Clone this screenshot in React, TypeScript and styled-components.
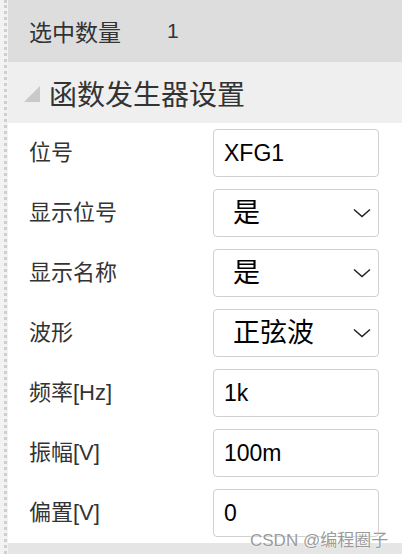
import styled, { createGlobalStyle } from 'styled-components'

const GlobalStyle = createGlobalStyle`
  html, body {
    margin: 0;
    padding: 0;
    background: #fff;
  }
  body {
    font-family: "Liberation Sans", "Noto Sans CJK SC", sans-serif;
  }
`

const Page = styled.div`
  position: relative;
  display: flex;
  width: 402px;
  height: 554px;
  overflow: hidden;
  background: #fff;
`

const Gutter = styled.div`
  width: 8px;
  flex: none;
  background: #f2f2f2;
  display: flex;
  justify-content: center;
  padding-left: 3px;
  box-sizing: border-box;

  &::before {
    content: '';
    width: 0;
    border-left: 3px dotted #cfcfcf;
  }
`

const Panel = styled.div`
  flex: 1;
  display: flex;
  flex-direction: column;
`

const CountBar = styled.div`
  height: 62px;
  background: #dddddd;
  display: flex;
  align-items: center;
  padding-left: 21px;
  font-size: 23px;
  color: #333;
`

const CountLabel = styled.span`
  width: 138px;
`

const CountValue = styled.span`
  font-size: 21px;
`

const SectionHead = styled.div`
  height: 61px;
  background: #efefef;
  display: flex;
  align-items: center;
  padding-left: 16px;
  gap: 9px;
  font-size: 28px;
  color: #333;
`

const Caret = styled.span`
  width: 0;
  height: 0;
  border-left: 16px solid transparent;
  border-bottom: 16px solid #c9c9c9;
  margin-top: 2px;
`

const Form = styled.div`
  display: flex;
  flex-direction: column;
  gap: 12px;
  padding: 6px 0 6px 21px;
`

const Row = styled.div`
  display: flex;
  align-items: center;
  height: 48px;
`

const Label = styled.div`
  width: 184px;
  font-size: 22px;
  color: #333;
  line-height: 1;
`

const Field = styled.div<{ $select?: boolean }>`
  width: 166px;
  height: 48px;
  box-sizing: border-box;
  border: 1.5px solid #d0d0d0;
  border-radius: 4px;
  display: flex;
  align-items: center;
  justify-content: space-between;
  padding: ${p => (p.$select ? '0 7px 0 19px' : '0 10px 0 10px')};
  font-size: ${p => (p.$select ? '27px' : '23px')};
  color: #000;
  line-height: 1;
`

const Chevron = styled.svg`
  width: 18px;
  height: 10px;
`

const Footer = styled.div`
  flex: 1;
  background: #e5e5e5;
`

const Watermark = styled.div`
  position: absolute;
  left: 250px;
  top: 526px;
  font-size: 17px;
  color: #9a9a9a;
  text-shadow: 0 0 2px #fff, 0 0 1px #fff;
  white-space: nowrap;
`

const fields = [
  { label: '位号', value: 'XFG1' },
  { label: '显示位号', value: '是', select: true },
  { label: '显示名称', value: '是', select: true },
  { label: '波形', value: '正弦波', select: true },
  { label: '频率[Hz]', value: '1k' },
  { label: '振幅[V]', value: '100m' },
  { label: '偏置[V]', value: '0' },
]

export default function App() {
  return (
    <Page>
      <GlobalStyle />
      <Gutter />
      <Panel>
        <CountBar>
          <CountLabel>选中数量</CountLabel>
          <CountValue>1</CountValue>
        </CountBar>
        <SectionHead>
          <Caret />
          函数发生器设置
        </SectionHead>
        <Form>
          {fields.map(f => (
            <Row key={f.label}>
              <Label>{f.label}</Label>
              <Field $select={f.select}>
                <span>{f.value}</span>
                {f.select && (
                  <Chevron viewBox="0 0 18 10">
                    <path d="M1 1.5 L9 8.5 L17 1.5" fill="none" stroke="#222" strokeWidth="1.5" />
                  </Chevron>
                )}
              </Field>
            </Row>
          ))}
        </Form>
        <Footer />
      </Panel>
      <Watermark>CSDN @编程圈子</Watermark>
    </Page>
  )
}
